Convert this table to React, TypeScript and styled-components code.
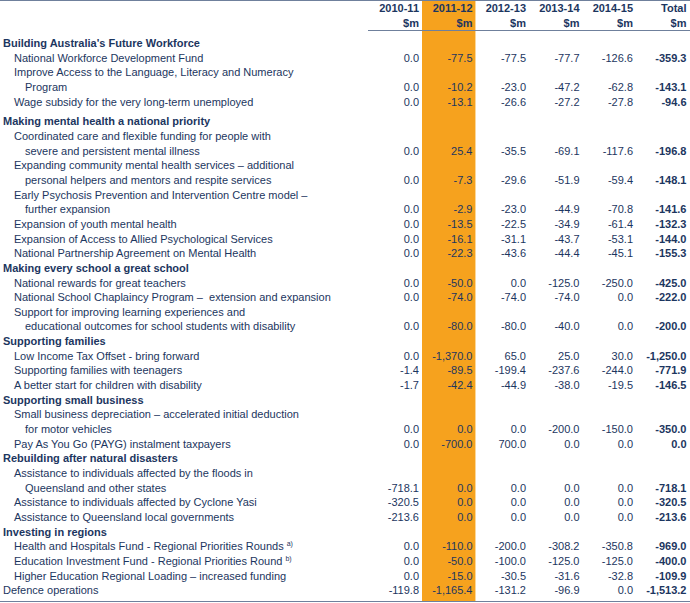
import styled, { createGlobalStyle } from 'styled-components';

const GlobalStyle = createGlobalStyle`
    html, body {
        margin: 0;
        padding: 0;
        background: #ffffff;
    }
`;

const NAVY = '#1c3660';
const RULE = '#6f809c';
const ORANGE = '#f6a21e';

const COLS = '369px repeat(6, 53.5px)';
const ROW_H = 14.65;

type Row = {
    label: string;
    cont?: string;
    sup?: string;
    values?: string[];
    kind?: 'heading' | 'item' | 'top';
    gap?: boolean;
};

const rows: Row[] = [
    { label: "Building Australia's Future Workforce", kind: 'heading' },
    { label: 'National Workforce Development Fund', values: ['0.0', '-77.5', '-77.5', '-77.7', '-126.6', '-359.3'] },
    { label: 'Improve Access to the Language, Literacy and Numeracy', cont: 'Program', values: ['0.0', '-10.2', '-23.0', '-47.2', '-62.8', '-143.1'] },
    { label: 'Wage subsidy for the very long-term unemployed', values: ['0.0', '-13.1', '-26.6', '-27.2', '-27.8', '-94.6'] },
    { label: 'Making mental health a national priority', kind: 'heading', gap: true },
    { label: 'Coordinated care and flexible funding for people with', cont: 'severe and persistent mental illness', values: ['0.0', '25.4', '-35.5', '-69.1', '-117.6', '-196.8'] },
    { label: 'Expanding community mental health services \u2013 additional', cont: 'personal helpers and mentors and respite services', values: ['0.0', '-7.3', '-29.6', '-51.9', '-59.4', '-148.1'] },
    { label: 'Early Psychosis Prevention and Intervention Centre model \u2013', cont: 'further expansion', values: ['0.0', '-2.9', '-23.0', '-44.9', '-70.8', '-141.6'] },
    { label: 'Expansion of youth mental health', values: ['0.0', '-13.5', '-22.5', '-34.9', '-61.4', '-132.3'] },
    { label: 'Expansion of Access to Allied Psychological Services', values: ['0.0', '-16.1', '-31.1', '-43.7', '-53.1', '-144.0'] },
    { label: 'National Partnership Agreement on Mental Health', values: ['0.0', '-22.3', '-43.6', '-44.4', '-45.1', '-155.3'] },
    { label: 'Making every school a great school', kind: 'heading' },
    { label: 'National rewards for great teachers', values: ['0.0', '-50.0', '0.0', '-125.0', '-250.0', '-425.0'] },
    { label: 'National School Chaplaincy Program \u2013\u00a0 extension and expansion', values: ['0.0', '-74.0', '-74.0', '-74.0', '0.0', '-222.0'] },
    { label: 'Support for improving learning experiences and', cont: 'educational outcomes for school students with disability', values: ['0.0', '-80.0', '-80.0', '-40.0', '0.0', '-200.0'] },
    { label: 'Supporting families', kind: 'heading' },
    { label: 'Low Income Tax Offset - bring forward', values: ['0.0', '-1,370.0', '65.0', '25.0', '30.0', '-1,250.0'] },
    { label: 'Supporting families with teenagers', values: ['-1.4', '-89.5', '-199.4', '-237.6', '-244.0', '-771.9'] },
    { label: 'A better start for children with disability', values: ['-1.7', '-42.4', '-44.9', '-38.0', '-19.5', '-146.5'] },
    { label: 'Supporting small business', kind: 'heading' },
    { label: 'Small business depreciation \u2013 accelerated initial deduction', cont: 'for motor vehicles', values: ['0.0', '0.0', '0.0', '-200.0', '-150.0', '-350.0'] },
    { label: 'Pay As You Go (PAYG) instalment taxpayers', values: ['0.0', '-700.0', '700.0', '0.0', '0.0', '0.0'] },
    { label: 'Rebuilding after natural disasters', kind: 'heading' },
    { label: 'Assistance to individuals affected by the floods in', cont: 'Queensland and other states', values: ['-718.1', '0.0', '0.0', '0.0', '0.0', '-718.1'] },
    { label: 'Assistance to individuals affected by Cyclone Yasi', values: ['-320.5', '0.0', '0.0', '0.0', '0.0', '-320.5'] },
    { label: 'Assistance to Queensland local governments', values: ['-213.6', '0.0', '0.0', '0.0', '0.0', '-213.6'] },
    { label: 'Investing in regions', kind: 'heading' },
    { label: 'Health and Hospitals Fund - Regional Priorities Rounds', sup: 'a)', values: ['0.0', '-110.0', '-200.0', '-308.2', '-350.8', '-969.0'] },
    { label: 'Education Investment Fund - Regional Priorities Round', sup: 'b)', values: ['0.0', '-50.0', '-100.0', '-125.0', '-125.0', '-400.0'] },
    { label: 'Higher Education Regional Loading \u2013 increased funding', values: ['0.0', '-15.0', '-30.5', '-31.6', '-32.8', '-109.9'] },
    { label: 'Defence operations', kind: 'top', values: ['-119.8', '-1,165.4', '-131.2', '-96.9', '0.0', '-1,513.2'] },
];

const years = ['2010-11', '2011-12', '2012-13', '2013-14', '2014-15', 'Total'];

const Table = styled.div`
    width: 690px;
    box-sizing: border-box;
    border-top: 1px solid ${RULE};
    border-bottom: 1px solid ${RULE};
    padding-bottom: 3px;
    font-family: 'Liberation Sans', Arial, sans-serif;
    font-size: 11px;
    color: ${NAVY};
    background: linear-gradient(
        to right,
        transparent 422px,
        ${ORANGE} 422px,
        ${ORANGE} 475px,
        #fbd79a 475px,
        #fbd79a 476px,
        transparent 476px
    );
`;

const Header = styled.div`
    display: grid;
    grid-template-columns: 368px 1fr;
    margin-bottom: 5px;
`;

const HeaderCols = styled.div`
    display: grid;
    grid-template-columns: 1px repeat(6, 53.5px);
    border-bottom: 1px solid ${RULE};
`;

const HeaderCell = styled.div`
    font-weight: bold;
    text-align: right;
    padding-right: 3.5px;
    line-height: 14.5px;
    white-space: nowrap;
`;

const BodyRow = styled.div<{ $gap?: boolean }>`
    display: grid;
    grid-template-columns: ${COLS};
    align-items: end;
    margin-top: ${(p) => (p.$gap ? '5px' : '0')};
`;

const Label = styled.div<{ $kind: 'heading' | 'item' | 'top' }>`
    line-height: ${ROW_H}px;
    padding-left: ${(p) => (p.$kind === 'item' ? '14px' : '3px')};
    font-weight: ${(p) => (p.$kind === 'heading' ? 'bold' : 'normal')};
    white-space: nowrap;
`;

const Cont = styled.div`
    padding-left: 11px;
`;

const Sup = styled.sup`
    font-size: 7px;
    line-height: 0;
    margin-left: 3px;
    vertical-align: 4px;
`;

const Num = styled.div<{ $total?: boolean }>`
    line-height: ${ROW_H}px;
    text-align: right;
    padding-right: 3.5px;
    white-space: nowrap;
    font-weight: ${(p) => (p.$total ? 'bold' : 'normal')};
`;

export default function App() {
    return (
        <>
            <GlobalStyle />
            <Table>
                <Header>
                    <div />
                    <HeaderCols>
                        <div />
                        {years.map((y) => (
                            <HeaderCell key={y}>
                                {y}
                                <br />
                                $m
                            </HeaderCell>
                        ))}
                    </HeaderCols>
                </Header>
                {rows.map((r, i) => (
                    <BodyRow key={i} $gap={r.gap}>
                        <Label $kind={r.kind ?? 'item'}>
                            {r.label}
                            {r.sup && <Sup>{r.sup}</Sup>}
                            {r.cont && <Cont>{r.cont}</Cont>}
                        </Label>
                        {r.values?.map((v, j) => (
                            <Num key={j} $total={j === 5}>
                                {v}
                            </Num>
                        ))}
                    </BodyRow>
                ))}
            </Table>
        </>
    );
}
